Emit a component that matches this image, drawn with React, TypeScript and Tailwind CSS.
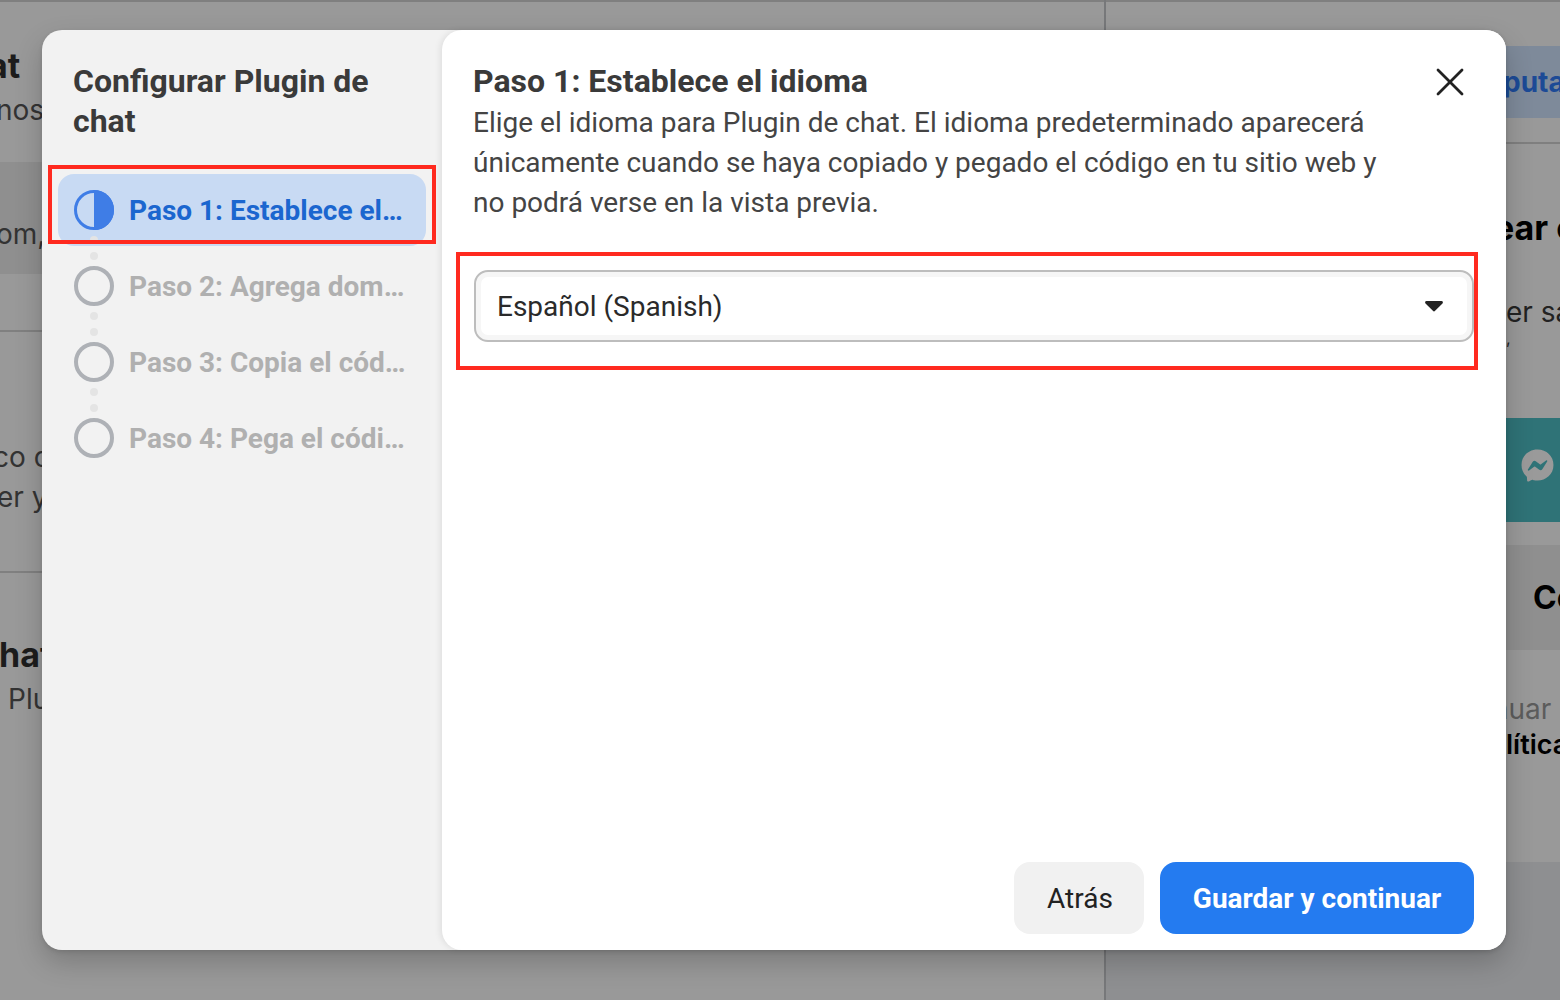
import { X } from 'lucide-react'
import { FaFacebookMessenger } from 'react-icons/fa'

const steps = [
  { label: 'Paso 1: Establece el idioma', active: true },
  { label: 'Paso 2: Agrega dominios', active: false },
  { label: 'Paso 3: Copia el código', active: false },
  { label: 'Paso 4: Pega el código', active: false },
]

function Backdrop() {
  return (
    <div className="flex h-[1000px] overflow-hidden bg-[#8e8f91] font-['Inter',sans-serif] text-[#1c1c1c]">
      {/* left column, mostly behind the dialog */}
      <div className="h-full w-[1106px] shrink-0 overflow-hidden whitespace-nowrap border-r-2 border-[#77787a] bg-[#999999]">
        <div className="h-[162px] border-t-2 border-[#7f7f7f]">
          <p className="-ml-3 mt-[42px] text-[34px] font-bold leading-[44px]">at</p>
          <p className="-ml-1 text-[28px] leading-[44px] text-[#333333]">nos</p>
        </div>
        <div className="-ml-1 flex h-[112px] items-end bg-[#8f8f8f] pb-[19px] text-[28px] text-[#333333]">om,</div>
        <div className="h-[58px] border-b-2 border-[#808080]" />
        <div className="h-[241px] border-b-2 border-[#808080] pt-[105px] text-[28px] leading-10 text-[#333333]">
          <p className="-ml-[7px]">co de</p>
          <p className="-ml-[3px]">er y</p>
        </div>
        <p className="-ml-px mt-[58px] text-[34px] font-bold leading-[48px]">hat</p>
        <p className="pl-2 text-[28px] leading-10 text-[#333333]">Plugin</p>
      </div>
      {/* right column, only a strip shows past the dialog */}
      <div className="flex h-full min-w-0 flex-1 flex-col overflow-hidden whitespace-nowrap">
        <div className="h-[144px] shrink-0 border-t-2 border-b-2 border-[#7f7f7f] bg-[#999999] pt-[44px]">
          <div className="flex h-[72px] items-center bg-[#7e8a9a] pl-[397px] text-[28px] font-bold text-[#1c4a96]">putación</div>
        </div>
        <div className="h-[718px] shrink-0 bg-[#999999] pl-[400px]">
          <p className="-ml-3 mt-[61px] text-[34px] font-bold leading-[46px] text-black">ear cuenta</p>
          <p className="mt-[41px] text-[28px] leading-10 text-[#222222]">er sa</p>
          <p className="text-[16px] leading-3 text-[#222222]">,</p>
          <div className="-ml-[400px] mt-[74px] flex h-[104px] items-center justify-end bg-[#2f7377] pb-[10px] pr-[6px]">
            <FaFacebookMessenger size={33} className="text-[#9a9a9a]" />
          </div>
          <div className="-ml-[400px] mt-[23px] flex h-[105px] items-center bg-[#8f8f8f] pl-[427px] text-[32px] font-bold text-black">Continuar</div>
          <p className="-ml-[14px] mt-[41px] text-[28px] leading-9 text-[#5c5c5c]">nuar con</p>
          <p className="text-[27px] font-semibold leading-9 text-black">lítica</p>
        </div>
      </div>
    </div>
  )
}

function StepIcon({ active }: { active: boolean }) {
  if (active) {
    return (
      <svg width="40" height="40" viewBox="0 0 40 40" className="shrink-0">
        <circle cx="20" cy="20" r="18.5" fill="none" stroke="#3f7de6" strokeWidth="3" />
        <path d="M20 0a20 20 0 0 1 0 40z" fill="#3f7de6" />
      </svg>
    )
  }
  return <div className="h-10 w-10 shrink-0 rounded-full border-4 border-[#aeb1b6]" />
}

export default function App() {
  return (
    <div className="relative h-[1000px] overflow-hidden">
      <Backdrop />
      <div className="absolute left-[42px] top-[30px] flex h-[920px] w-[1464px] rounded-[20px] bg-[#f2f2f2] font-['Roboto',sans-serif] shadow-[0_12px_28px_rgba(0,0,0,0.2),0_2px_4px_rgba(0,0,0,0.1)]">
        {/* sidebar */}
        <div className="w-[400px] shrink-0 pl-4 pr-4 pt-[31px]">
          <h2 className="px-[15px] text-[32px] font-bold leading-10 text-[#3a3a3a]">Configurar Plugin de chat</h2>
          <div className="relative mt-[33px] flex flex-col gap-1">
            {steps.map((step, index) => (
              <div
                key={step.label}
                className={`relative flex h-[72px] items-center gap-[15px] rounded-2xl pl-4 pr-5 ${step.active ? 'bg-[#c8daf3]' : ''}`}
              >
                <StepIcon active={step.active} />
                <span className={`mt-[2px] truncate text-[28px] font-bold ${step.active ? 'text-[#1b66cf]' : 'text-[#b0b0b0]'}`}>{step.label}</span>
                {index < steps.length - 1 && (
                  <div className="absolute left-8 top-[62px] z-10 flex flex-col gap-2">
                    <div className="h-2 w-2 rounded-full bg-[#e4e4e4]" />
                    <div className="h-2 w-2 rounded-full bg-[#e4e4e4]" />
                  </div>
                )}
                {step.active && <div className="pointer-events-none absolute -left-[10px] -right-[10px] -top-[9px] bottom-[2px] z-20 border-4 border-[#ff2a1f]" />}
              </div>
            ))}
          </div>
        </div>

        {/* main panel */}
        <div className="flex min-w-0 flex-1 flex-col rounded-[20px] bg-white pl-[31px] pr-8 pt-[31px] shadow-[-2px_0_6px_rgba(0,0,0,0.08)]">
          <div className="relative">
            <h1 className="text-[32px] font-bold leading-10 text-[#3a3a3a]">Paso 1: Establece el idioma</h1>
            <p className="mt-[2px] w-[920px] text-[28px] leading-10 text-[#444444]">
              Elige el idioma para Plugin de chat. El idioma predeterminado aparecerá únicamente cuando se haya copiado y pegado el código en tu sitio web y no podrá verse en la vista previa.
            </p>
            <button className="absolute -top-[3px] right-0 flex h-12 w-12 items-center justify-center text-[#222222]">
              <X size={48} strokeWidth={1.4} />
            </button>
          </div>

          <div className="relative ml-px mt-[47px]">
            <div className="flex h-[72px] items-center justify-between rounded-[14px] border-2 border-[#bdbdbd] bg-white pl-[21px] pr-[28px] text-[28px] text-[#2a2a2a] shadow-[inset_0_0_0_5px_#f6f6f6]">
              <span className="mt-[2px]">Español (Spanish)</span>
              <svg width="20" height="12" viewBox="0 0 20 12">
                <path d="M2.5 1h15a1.4 1.4 0 0 1 1 2.4l-7.4 7.4a1.5 1.5 0 0 1-2.2 0L1.500 3.400a1.4 1.4 0 0 1 1-2.400z" fill="#222222" />
              </svg>
            </div>
            <div className="pointer-events-none absolute -bottom-7 -left-[18px] -right-1 -top-[18px] border-4 border-[#ff2a1f]" />
          </div>

          <div className="mb-4 mt-auto flex justify-end gap-4">
            <button className="h-[72px] w-[130px] rounded-2xl bg-[#f1f1f1] pl-[2px] pt-[2px] text-[28px] text-[#222222]">Atrás</button>
            <button className="h-[72px] w-[314px] rounded-2xl bg-[#247bf0] pt-[2px] text-[28px] font-bold text-white">Guardar y continuar</button>
          </div>
        </div>
      </div>
    </div>
  )
}
